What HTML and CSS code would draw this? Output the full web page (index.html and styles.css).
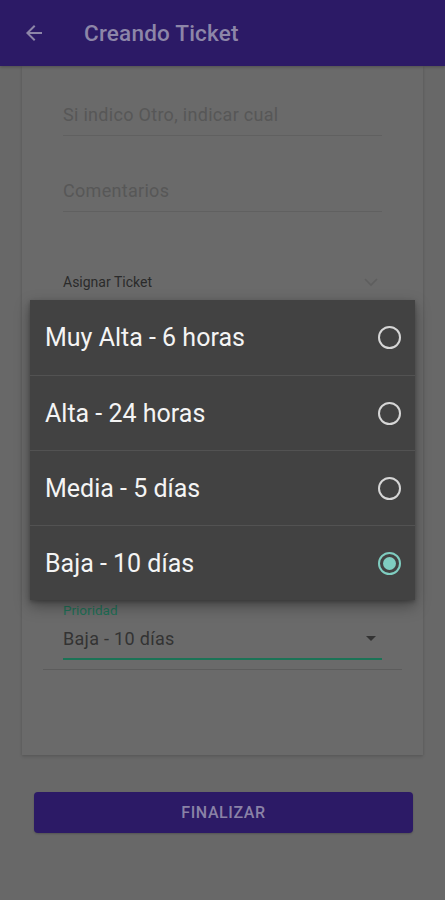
FILE: index.html
```html
<!DOCTYPE html>
<html lang="es">
<head>
<meta charset="utf-8">
<title>Creando Ticket</title>
<link rel="stylesheet" href="styles.css">
</head>
<body>
<div class="app">
  <header class="appbar">
    <svg class="back" width="24" height="24" viewBox="0 0 24 24"><path d="M20 11H7.83l5.59-5.59L12 4l-8 8 8 8 1.41-1.41L7.83 13H20v-2z" fill="currentColor"/></svg>
    <h1 class="title">Creando Ticket</h1>
  </header>
  <main class="content">
    <section class="card">
      <div class="field">Si indico Otro, indicar cual</div>
      <div class="field field-2">Comentarios</div>
      <div class="select-row">
        <span class="select-label">Asignar Ticket</span>
        <svg class="chev" width="16" height="10" viewBox="0 0 16 10"><path d="M2 2l6 6 6-6" fill="none" stroke="currentColor" stroke-width="1.6"/></svg>
      </div>
      <div class="priority">
        <div class="priority-label">Prioridad</div>
        <div class="priority-value">
          <span>Baja - 10 días</span>
          <svg class="tri" width="10" height="6" viewBox="0 0 10 6"><path d="M0 0h10L5 5z" fill="currentColor"/></svg>
        </div>
      </div>
      <div class="divider"></div>
    </section>
    <button class="finish">FINALIZAR</button>
  </main>

  <div class="dialog">
    <div class="option"><span>Muy Alta - 6 horas</span><span class="radio"></span></div>
    <div class="option"><span>Alta - 24 horas</span><span class="radio"></span></div>
    <div class="option"><span>Media - 5 días</span><span class="radio"></span></div>
    <div class="option"><span>Baja - 10 días</span><span class="radio checked"></span></div>
  </div>
</div>
</body>
</html>
```

FILE: styles.css
```css
* { box-sizing: border-box; }
html, body { margin: 0; padding: 0; }
body {
  background: #686868;
  font-family: Roboto, "Noto Sans", "Liberation Sans", sans-serif;
  width: 445px;
  height: 900px;
  overflow: hidden;
}
.app { position: relative; width: 445px; height: 900px; }
.appbar {
  height: 66px;
  background: #2c1a66;
  display: flex;
  align-items: center;
  padding-left: 22px;
  box-shadow: 0 1px 3px rgba(0,0,0,0.25);
  position: relative;
  z-index: 1;
}
.back { color: #8d86a8; width: 24px; height: 24px; }
.title {
  margin: 0 0 0 38px;
  font-size: 22.5px;
  font-weight: 500;
  color: #8d86a8;
  letter-spacing: 0.2px;
}
.content { padding: 0 22px; }
.card {
  background: #6a6a6a;
  height: 689px;
  padding: 38px 41px 0;
  box-shadow: 0 2px 3px rgba(0,0,0,0.12), 0 0 2px rgba(0,0,0,0.08);
  display: flex;
  flex-direction: column;
}
.field {
  font-size: 18px;
  line-height: 22px;
  color: #575757;
  letter-spacing: 0.3px;
  padding-bottom: 9px;
  border-bottom: 1px solid #606060;
}
.field-2 { margin-top: 44px; }
.select-row {
  margin-top: 62px;
  display: flex;
  align-items: center;
  justify-content: space-between;
  padding-right: 3px;
}
.select-label { font-size: 14px; line-height: 16px; color: #2a2a2a; }
.chev { color: #5e5e5e; }
.priority { margin-top: 312px; }
.priority-label { font-size: 13.5px; line-height: 16px; color: #1e6e55; }
.priority-value {
  margin-top: 9px;
  display: flex;
  align-items: center;
  justify-content: space-between;
  font-size: 18px;
  line-height: 24px;
  letter-spacing: 0.3px;
  color: #333;
  padding: 0 6px 7px 0;
  border-bottom: 2px solid #1b7356;
}
.tri { color: #333; }
.divider {
  margin: 9px -20px 0;
  height: 1px;
  background: #5c5c5c;
}
.finish {
  display: block;
  margin: 37px 0 0 12px;
  width: 379px;
  height: 41px;
  border: none;
  border-radius: 4px;
  background: #2c1a66;
  color: #8a82a6;
  font-family: Roboto, "Noto Sans", sans-serif;
  font-size: 16px;
  font-weight: 500;
  letter-spacing: 0.6px;
  box-shadow: 0 1px 2px rgba(0,0,0,0.2);
}
.dialog {
  position: absolute;
  left: 30px;
  top: 300px;
  width: 385px;
  background: #424242;
  box-shadow: 0 6px 14px rgba(0,0,0,0.35), 0 2px 4px rgba(0,0,0,0.25);
}
.option {
  height: 75px;
  display: flex;
  align-items: center;
  justify-content: space-between;
  padding: 0 14px 0 15px;
  color: #f4f4f4;
  font-size: 25px;
  border-top: 1px solid #525252;
}
.option:first-child { border-top: none; height: 75px; }
.radio {
  width: 23px;
  height: 23px;
  border: 2px solid #d6d6d6;
  border-radius: 50%;
  position: relative;
}
.radio.checked { border-color: #7fcdc0; }
.radio.checked::after {
  content: "";
  position: absolute;
  left: 3px; top: 3px;
  width: 13px; height: 13px;
  border-radius: 50%;
  background: #7fcdc0;
}
```
